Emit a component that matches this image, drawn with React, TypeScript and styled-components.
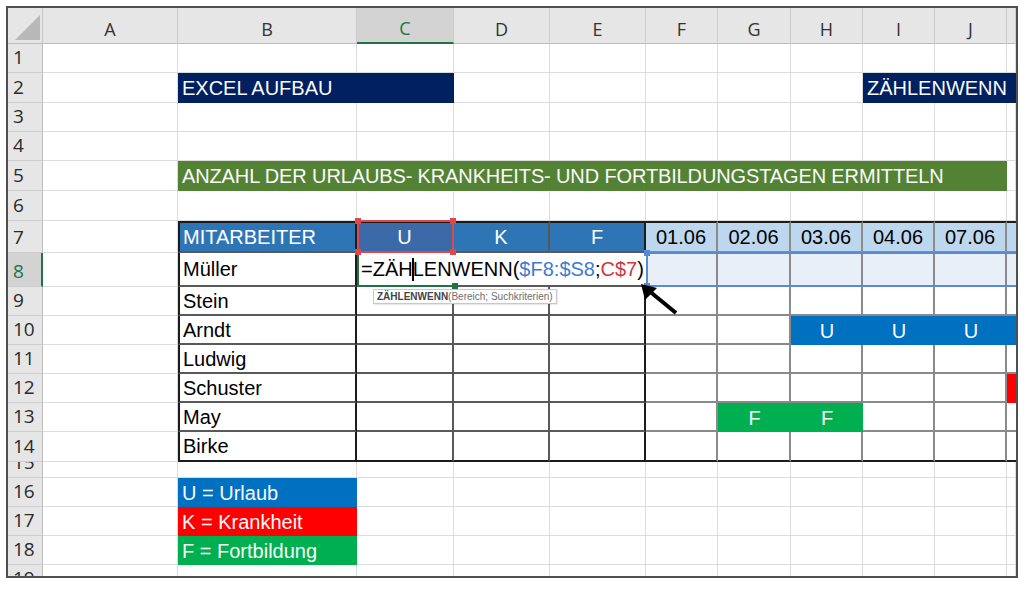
import React from 'react';
import styled, { createGlobalStyle, css } from 'styled-components';

const GlobalStyle = createGlobalStyle`
  *, *::before, *::after { box-sizing: border-box; }
  html, body { margin: 0; padding: 0; background: #fff; }
  body { font-family: "Liberation Sans", Arial, sans-serif; }
`;

// column widths: row header, A..J, and the cut-off sliver of K
const COLS = [35, 135, 179, 97, 96, 96, 72, 73, 72, 72, 72, 9];
const LETTERS = ['A', 'B', 'C', 'D', 'E', 'F', 'G', 'H', 'I', 'J', ''];
const ROWS = [29, 30, 29, 29, 30, 30, 32, 34, 29, 29, 29, 29, 29, 30, 16, 29, 29, 29, 29];

const NAVY = '#002060';
const OLIVE = '#548235';
const HEAD_BLUE = '#2e75b6';
const BLUE = '#0070c0';
const RED = '#ff0000';
const GREEN = '#00b050';
const EXCEL_GREEN = '#217346';

const NAMES = ['Müller', 'Stein', 'Arndt', 'Ludwig', 'Schuster', 'May', 'Birke'];
const DATES = ['01.06', '02.06', '03.06', '04.06', '07.06'];

type Pos = { $r: number; $c: number; $span?: number };

const placed = css<Pos>`
  grid-row: ${(p) => p.$r};
  grid-column: ${(p) => p.$c} / span ${(p) => p.$span ?? 1};
`;

type Edge = 'thick' | 'dark' | 'grey' | 'none';
const EDGE: Record<Edge, string> = {
  thick: '2px solid #1c1c1c',
  dark: '2px solid #595959',
  grey: '2px solid #8a8a8a',
  none: '0',
};

type CellSpec = { text?: string; bg?: string; fg?: string; center?: boolean; flat?: boolean };

const specFor = (row: number, col: number): CellSpec => {
  if (row === 7) {
    if (col === 3) return { text: 'MITARBEITER', bg: HEAD_BLUE, fg: '#fff' };
    if (col === 4) return { text: 'U', bg: '#3c6aa9', fg: '#fff', center: true };
    if (col === 5) return { text: 'K', bg: HEAD_BLUE, fg: '#fff', center: true };
    if (col === 6) return { text: 'F', bg: HEAD_BLUE, fg: '#fff', center: true };
    return { text: DATES[col - 7], bg: '#bdd7ee', center: true };
  }
  if (col === 3) return { text: NAMES[row - 8] };
  if (row === 8 && col >= 7) return { bg: '#e9eff9' };
  if (row === 10 && col >= 9) return { text: col < 12 ? 'U' : undefined, bg: BLUE, fg: '#fff', center: true, flat: true };
  if (row === 12 && col === 12) return { bg: RED, flat: true };
  if (row === 13 && (col === 8 || col === 9)) return { text: 'F', bg: GREEN, fg: '#fff', center: true, flat: true };
  return {};
};

const rightEdge = (col: number): Edge => {
  if (col === 3 || col === 6) return 'thick';
  if (col === 4 || col === 5) return 'dark';
  if (col === 12) return 'none';
  return 'grey';
};

const App = () => {
  const gridCells = [];
  for (let r = 1; r <= ROWS.length; r++) {
    for (let c = 2; c <= 12; c++) {
      gridCells.push(<GridCell key={`g-${r}-${c}`} $r={r + 1} $c={c} />);
    }
  }

  const tableCells = [];
  for (let row = 7; row <= 14; row++) {
    for (let col = 3; col <= 12; col++) {
      const s = specFor(row, col);
      tableCells.push(
        <TableCell
          key={`t-${row}-${col}`}
          $r={row + 1}
          $c={col}
          $bg={s.bg}
          $fg={s.fg}
          $center={s.center}
          $top={row === 7 ? 'thick' : 'none'}
          $left={col === 3 ? 'thick' : 'none'}
          $right={s.flat ? 'none' : rightEdge(col)}
          $bottom={row === 14 ? 'thick' : s.flat ? 'none' : col <= 6 ? 'dark' : 'grey'}
        >
          {s.text}
        </TableCell>
      );
    }
  }

  return (
    <>
      <GlobalStyle />
      <Frame>
        <Sheet>
          <Corner>
            <CornerMark />
          </Corner>
          {LETTERS.map((l, i) => (
            <ColHead key={`c-${i}`} $c={i + 2} $active={l === 'C'}>
              {l}
            </ColHead>
          ))}
          {ROWS.map((_, i) => (
            <RowHead key={`r-${i}`} $r={i + 2} $active={i + 1 === 8}>
              {i + 1}
            </RowHead>
          ))}

          {gridCells}

          <Bar $r={3} $c={3} $span={2} $bg={NAVY}>EXCEL AUFBAU</Bar>
          <Bar $r={3} $c={10} $span={3} $bg={NAVY}>ZÄHLENWENN</Bar>
          <Bar $r={6} $c={3} $span={9} $bg={OLIVE} $tight>
            ANZAHL DER URLAUBS- KRANKHEITS- UND FORTBILDUNGSTAGEN ERMITTELN
          </Bar>

          {tableCells}

          <EditBox $r={9} $c={4} $span={3}>
            =ZÄH<Caret />LENWENN(<RefText $tone="#3f7bd0">$F8:$S8</RefText>;
            <RefText $tone="#d2343c">C$7</RefText>)
          </EditBox>
          <ActiveBox $r={9} $c={4}>
            <Handle $tone={EXCEL_GREEN} $x="right" $y="bottom" />
          </ActiveBox>
          <RefBox $r={8} $c={4} $tone="#e0474c">
            <Handle $tone="#e0474c" $x="left" $y="top" />
            <Handle $tone="#e0474c" $x="right" $y="top" />
            <Handle $tone="#e0474c" $x="left" $y="bottom" />
            <Handle $tone="#e0474c" $x="right" $y="bottom" />
          </RefBox>
          <RefBox $r={9} $c={7} $span={6} $tone="#5b8ad5" $open>
            <Handle $tone="#5b8ad5" $x="left" $y="top" />
            <Handle $tone="#5b8ad5" $x="left" $y="bottom" />
          </RefBox>

          <Bar $r={17} $c={3} $bg={BLUE}>U = Urlaub</Bar>
          <Bar $r={18} $c={3} $bg={RED}>K = Krankheit</Bar>
          <Bar $r={19} $c={3} $bg={GREEN}>F = Fortbildung</Bar>
        </Sheet>

        <Tip>
          <b>ZÄHLENWENN</b>(Bereich; Suchkriterien)
        </Tip>
        <Pointer width="48" height="42" viewBox="0 0 48 42">
          <line x1="12" y1="11" x2="40" y2="34" stroke="#000" strokeWidth="4" />
          <polygon points="5,5 21,9 9,21" fill="#000" />
        </Pointer>
      </Frame>
    </>
  );
};

export default App;

const Frame = styled.div`
  position: relative;
  width: 1012px;
  height: 572px;
  margin: 6px 0 0 6px;
  border: 2px solid #505050;
  overflow: hidden;
  background: #fff;
`;

const Sheet = styled.div`
  display: grid;
  grid-template-columns: ${COLS.map((w) => `${w}px`).join(' ')};
  grid-template-rows: 36px ${ROWS.map((h) => `${h}px`).join(' ')};
`;

const Corner = styled.div`
  grid-row: 1;
  grid-column: 1;
  display: flex;
  align-items: flex-end;
  justify-content: flex-end;
  padding: 0 2px 3px 0;
  background: #e6e6e6;
  border-right: 1px solid #c6c6c6;
  border-bottom: 1px solid #bdbdbd;
`;

const CornerMark = styled.div`
  width: 25px;
  height: 25px;
  background: #b8b8b8;
  clip-path: polygon(100% 0, 100% 100%, 0 100%);
`;

const ColHead = styled.div<{ $c: number; $active?: boolean }>`
  grid-row: 1;
  grid-column: ${(p) => p.$c};
  display: flex;
  align-items: flex-end;
  justify-content: center;
  padding-bottom: 5px;
  font: 18px/1 "Open Sans", "Noto Sans", sans-serif;
  color: ${(p) => (p.$active ? EXCEL_GREEN : '#333')};
  background: ${(p) => (p.$active ? '#d3d3d3' : '#e6e6e6')};
  border-right: 1px solid #cbcbcb;
  border-bottom: ${(p) => (p.$active ? `2px solid ${EXCEL_GREEN}` : '1px solid #bdbdbd')};
`;

const RowHead = styled.div<{ $r: number; $active?: boolean }>`
  grid-row: ${(p) => p.$r};
  grid-column: 1;
  display: flex;
  align-items: flex-end;
  padding: 0 0 5px 5px;
  overflow: hidden;
  font: 19px/1 "Open Sans", "Noto Sans", sans-serif;
  color: ${(p) => (p.$active ? EXCEL_GREEN : '#2a2a2a')};
  background: ${(p) => (p.$active ? '#d3d3d3' : '#e6e6e6')};
  border-bottom: 1px solid #cdcdcd;
  border-right: ${(p) => (p.$active ? `2px solid ${EXCEL_GREEN}` : '1px solid #bdbdbd')};
`;

const GridCell = styled.div<Pos>`
  ${placed}
  border-right: 1px solid #dcdcdc;
  border-bottom: 1px solid #dcdcdc;
`;

const Bar = styled.div<Pos & { $bg: string; $tight?: boolean }>`
  ${placed}
  display: flex;
  align-items: center;
  padding-left: 4px;
  overflow: hidden;
  white-space: nowrap;
  font-size: 20px;
  line-height: 1;
  letter-spacing: ${(p) => (p.$tight ? '-0.13px' : 'normal')};
  color: #fafafa;
  background: ${(p) => p.$bg};
`;

const TableCell = styled.div<
  Pos & { $bg?: string; $fg?: string; $center?: boolean; $top: Edge; $left: Edge; $right: Edge; $bottom: Edge }
>`
  ${placed}
  display: flex;
  align-items: center;
  justify-content: ${(p) => (p.$center ? 'center' : 'flex-start')};
  padding-left: ${(p) => (p.$center ? 0 : 3)}px;
  white-space: nowrap;
  font-size: 20px;
  line-height: 1;
  color: ${(p) => p.$fg ?? '#000'};
  background: ${(p) => p.$bg ?? '#fff'};
  border-top: ${(p) => EDGE[p.$top]};
  border-left: ${(p) => EDGE[p.$left]};
  border-right: ${(p) => EDGE[p.$right]};
  border-bottom: ${(p) => EDGE[p.$bottom]};
`;

const EditBox = styled.div<Pos>`
  ${placed}
  display: flex;
  align-items: center;
  margin-bottom: 2px;
  padding-left: 4px;
  white-space: nowrap;
  font-size: 20px;
  line-height: 1;
  color: #000;
  background: #fff;
`;

const Caret = styled.span`
  display: inline-block;
  width: 2px;
  height: 23px;
  margin: 0 -1px;
  background: #000;
`;

const RefText = styled.span<{ $tone: string }>`
  color: ${(p) => p.$tone};
`;

const ActiveBox = styled.div<Pos>`
  ${placed}
  position: relative;
  border-left: 2px solid ${EXCEL_GREEN};
  border-bottom: 2px solid ${EXCEL_GREEN};
`;

const RefBox = styled.div<Pos & { $tone: string; $open?: boolean }>`
  ${placed}
  position: relative;
  margin-top: -1px;
  border: 2px solid ${(p) => p.$tone};
  border-right: ${(p) => (p.$open ? 'none' : `2px solid ${p.$tone}`)};
`;

const Handle = styled.span<{ $tone: string; $x: 'left' | 'right'; $y: 'top' | 'bottom' }>`
  position: absolute;
  width: 6px;
  height: 6px;
  background: ${(p) => p.$tone};
  ${(p) => p.$x}: -4px;
  ${(p) => p.$y}: -4px;
`;

const Tip = styled.div`
  position: absolute;
  left: 365px;
  top: 281px;
  height: 15px;
  padding: 0 3px;
  white-space: nowrap;
  font: 10px/13px "Liberation Sans", Arial, sans-serif;
  color: #6e6e6e;
  background: #fff;
  border: 1px solid #c8c8c8;
  box-shadow: 1px 1px 1px rgba(0, 0, 0, 0.08);

  b {
    color: #444;
  }
`;

const Pointer = styled.svg`
  position: absolute;
  left: 628px;
  top: 271px;
`;
